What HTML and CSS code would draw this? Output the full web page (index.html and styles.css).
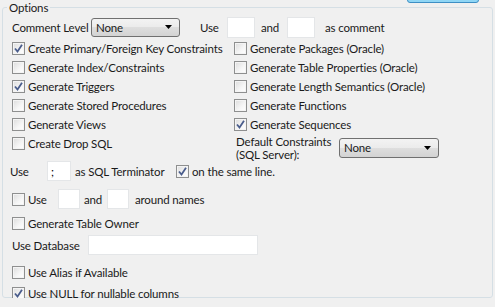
FILE: index.html
```html
<!DOCTYPE html>
<html lang="en">
<head>
    <meta charset="UTF-8">
    <title>Options</title>
    <link rel="stylesheet" href="styles.css">
</head>
<body>

    <div class="ok-button"></div>

    <fieldset class="options">
        <legend>Options</legend>

        <div class="row top-row">
            <span class="label comment-label">Comment Level</span>
            <div class="combo comment-combo">
                <span>None</span>
                <svg class="arrow" width="7" height="4" viewBox="0 0 7 4"><path d="M0 0H7L3.5 4Z" fill="#000"/></svg>
            </div>
            <span class="label use-label">Use</span>
            <input type="text" class="field small">
            <span class="label and-label">and</span>
            <input type="text" class="field small">
            <span class="label as-label">as comment</span>
        </div>

        <div class="columns">
            <div class="col">
                <label class="check"><span class="box on"><svg width="9" height="9" viewBox="0 0 9 9"><path d="M1 4.5L3.5 7.5L8 0.8" fill="none" stroke="#4a5d8c" stroke-width="1.8"/></svg></span>Create Primary/Foreign Key Constraints</label>
                <label class="check"><span class="box"></span>Generate Index/Constraints</label>
                <label class="check"><span class="box on"><svg width="9" height="9" viewBox="0 0 9 9"><path d="M1 4.5L3.5 7.5L8 0.8" fill="none" stroke="#4a5d8c" stroke-width="1.8"/></svg></span>Generate Triggers</label>
                <label class="check"><span class="box"></span>Generate Stored Procedures</label>
                <label class="check"><span class="box"></span>Generate Views</label>
                <label class="check"><span class="box"></span>Create Drop SQL</label>
            </div>
            <div class="col">
                <label class="check"><span class="box"></span>Generate Packages (Oracle)</label>
                <label class="check"><span class="box"></span>Generate Table Properties (Oracle)</label>
                <label class="check"><span class="box"></span>Generate Length Semantics (Oracle)</label>
                <label class="check"><span class="box"></span>Generate Functions</label>
                <label class="check"><span class="box on"><svg width="9" height="9" viewBox="0 0 9 9"><path d="M1 4.5L3.5 7.5L8 0.8" fill="none" stroke="#4a5d8c" stroke-width="1.8"/></svg></span>Generate Sequences</label>
                <div class="defaults">
                    <span class="label defaults-label">Default Constraints<br>(SQL Server):</span>
                    <div class="combo defaults-combo">
                        <span>None</span>
                        <svg class="arrow" width="7" height="4" viewBox="0 0 7 4"><path d="M0 0H7L3.5 4Z" fill="#000"/></svg>
                    </div>
                </div>
            </div>
        </div>

        <div class="row term-row">
            <span class="label term-use">Use</span>
            <input type="text" class="field term" value=";">
            <span class="label term-label">as SQL Terminator</span>
            <label class="check same-line"><span class="box on"><svg width="9" height="9" viewBox="0 0 9 9"><path d="M1 4.5L3.5 7.5L8 0.8" fill="none" stroke="#4a5d8c" stroke-width="1.8"/></svg></span>on the same line.</label>
        </div>

        <div class="row names-row">
            <label class="check names-check"><span class="box"></span>Use</label>
            <input type="text" class="field tiny">
            <span class="label names-and">and</span>
            <input type="text" class="field tiny">
            <span class="label names-label">around names</span>
        </div>

        <label class="check owner">
            <span class="box"></span>Generate Table Owner
        </label>

        <div class="row db-row">
            <span class="label db-label">Use Database</span>
            <input type="text" class="field db">
        </div>

        <label class="check alias"><span class="box"></span>Use Alias if Available</label>
        <label class="check"><span class="box on"><svg width="9" height="9" viewBox="0 0 9 9"><path d="M1 4.5L3.5 7.5L8 0.8" fill="none" stroke="#4a5d8c" stroke-width="1.8"/></svg></span>Use NULL for nullable columns</label>
    </fieldset>

</body>
</html>
```

FILE: styles.css
```css
body {
    margin: 0;
    background: #f0f0f0;
    font-family: Lato, "Noto Sans", sans-serif;
    font-size: 11.5px;
    letter-spacing: -0.15px;
    color: #1a1a1a;
    overflow: hidden;
}
.ok-button {
    position: absolute;
    left: 407px;
    top: -20px;
    width: 70px;
    height: 21px;
    border: 1px solid #3d8fc4;
    border-radius: 3px;
    background: #8fd6f5;
}
.options {
    box-sizing: border-box;
    width: 491px;
    height: 298px;
    margin: 0 0 0 2px;
    padding: 1px 7px 0 7px;
    border: 1px solid #d5dfe5;
    border-radius: 3px;
}
.options legend {
    padding: 0 2px;
    margin-left: -3px;
    line-height: 15px;
}
.row {
    display: flex;
    align-items: center;
}
.label {
    flex: none;
    line-height: 15px;
    white-space: nowrap;
}
.top-row {
    height: 22px;
}
.comment-label {
    width: 77px;
    margin-left: 2px;
}
.combo {
    box-sizing: border-box;
    display: flex;
    align-items: center;
    justify-content: space-between;
    flex: none;
    height: 19px;
    padding: 0 7px 0 4px;
    border: 1px solid #707070;
    border-radius: 3px;
    background: linear-gradient(#f3f3f3, #ebebeb 50%, #dedede 50%, #d3d3d3);
}
.comment-combo {
    width: 89px;
    margin-left: 2px;
}
.use-label {
    width: 20px;
    margin-left: 20px;
}
.field {
    box-sizing: border-box;
    flex: none;
    height: 21px;
    border: 1px solid #e4e6e8;
    background: #fff;
    font: inherit;
    padding: 0 3px;
    margin: 0;
    outline: none;
}
.field.small {
    width: 28px;
    margin-left: 7px;
}
.and-label {
    width: 20px;
    margin-left: 6px;
}
.top-row .and-label + .field {
    margin-left: 6px;
}
.as-label {
    margin-left: 10px;
}
.columns {
    display: flex;
    height: 123px;
}
.col {
    display: flex;
    flex-direction: column;
}
.col:first-child {
    width: 222px;
    flex: none;
}
.check {
    display: flex;
    align-items: center;
    height: 19px;
    margin-left: 2px;
    white-space: nowrap;
}
.box {
    box-sizing: border-box;
    display: flex;
    align-items: center;
    justify-content: center;
    flex: none;
    width: 13px;
    height: 13px;
    margin-right: 3px;
    border: 1px solid #8e8f8f;
    background: linear-gradient(135deg, #dcdcdc, #f6f6f6 60%, #ffffff);
    box-shadow: inset 0 0 0 1px #f4f4f4;
}
.columns .check:first-child {
    margin-top: 1px;
}
.defaults {
    display: flex;
    align-items: center;
    height: 27px;
    margin-left: 4px;
}
.defaults-label {
    line-height: 13px;
    width: 103px;
}
.defaults-combo {
    width: 100px;
    height: 20px;
}
.term-row {
    height: 20px;
}
.term-use {
    width: 37px;
}
.field.term {
    width: 24px;
    height: 20px;
}
.term-label {
    width: 97px;
    margin-left: 4px;
}
.same-line {
    margin-left: 4px;
}
.names-row {
    height: 20px;
    margin-top: 8px;
}
.names-check {
    width: 46px;
    flex: none;
}
.field.tiny {
    width: 22px;
    height: 20px;
}
.names-and {
    width: 23px;
    margin-left: 4px;
}
.names-label {
    margin-left: 6px;
}
.owner {
    margin-top: 5px;
}
.db-row {
    height: 20px;
    margin-top: 2px;
}
.db-label {
    width: 76px;
    margin-left: 2px;
}
.field.db {
    width: 170px;
    height: 20px;
}
.alias {
    margin-top: 8px;
}
.alias + .check {
    margin-top: 2px;
}
```
